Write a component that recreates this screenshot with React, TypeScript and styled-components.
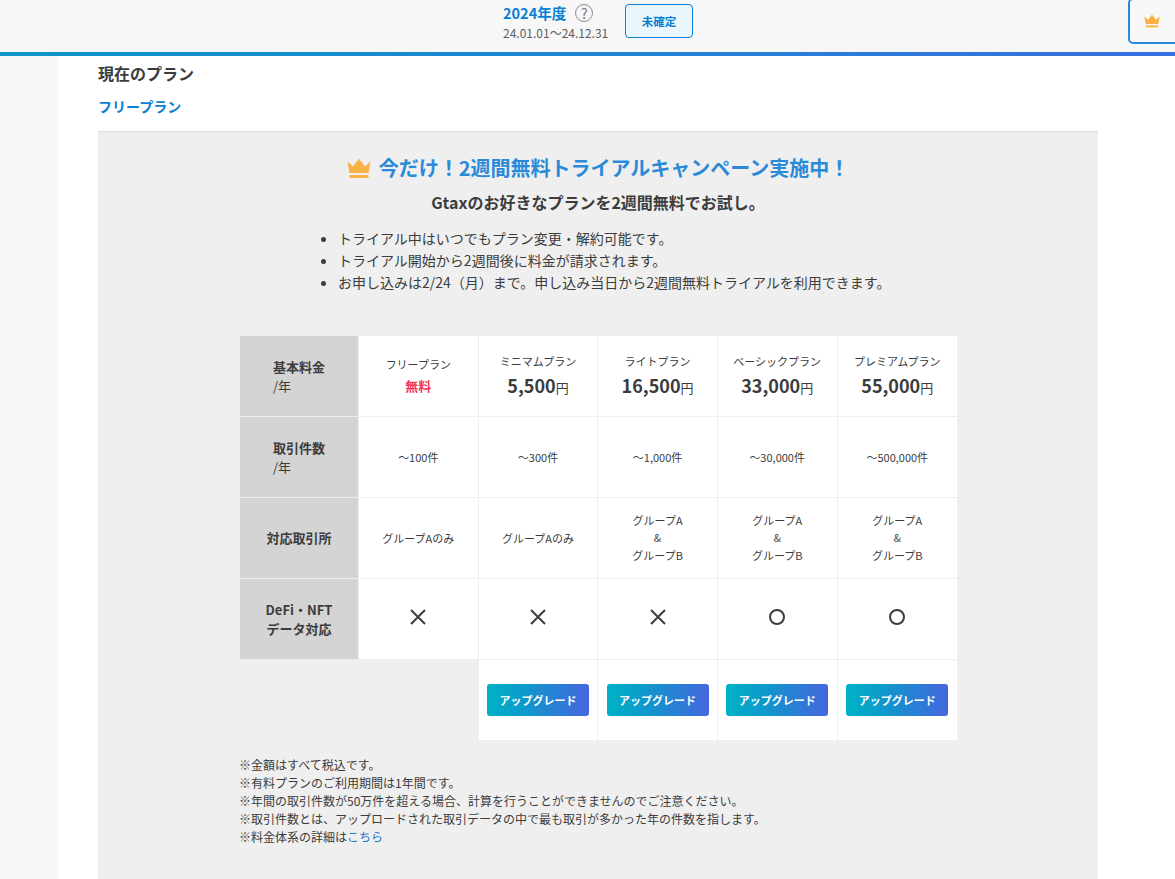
import React from 'react';
import styled, { createGlobalStyle } from 'styled-components';

const GlobalStyle = createGlobalStyle`
  html, body {
    margin: 0;
    padding: 0;
    height: 879px;
    overflow: hidden;
    background: #f7f7f7;
    color: #3c3c3c;
    font-family: "Noto Sans CJK JP", "Noto Sans", sans-serif;
  }
`;

const Header = styled.header`
  position: relative;
  height: 52px;
  background: #f7f7f7;
  border-bottom: 4px solid transparent;
  border-image: linear-gradient(90deg, #0d96c9, #1f85d4 50%, #3a6fde) 1;
  display: flex;
  justify-content: center;
  padding-left: 21px;
`;

const YearBlock = styled.div`
  width: 122px;
  padding-top: 3px;
`;

const YearRow = styled.div`
  display: flex;
  align-items: center;
  gap: 9px;
  height: 20px;
`;

const YearTitle = styled.span`
  font-size: 14.5px;
  font-weight: 700;
  color: #0a7fd3;
  line-height: 20px;
`;

const Help = styled.span`
  width: 16px;
  height: 16px;
  border: 1.5px solid #8a8a8a;
  border-radius: 50%;
  font-size: 14px;
  font-weight: 400;
  color: #777;
  display: flex;
  align-items: center;
  justify-content: center;
  line-height: 1;
`;

const Period = styled.div`
  font-size: 12px;
  color: #5e5e5e;
  line-height: 18px;
  margin-top: 1px;
`;

const Status = styled.div`
  width: 66px;
  height: 32px;
  margin-top: 4px;
  background: #e9f6fc;
  border: 1px solid #0a7fd3;
  border-radius: 4px;
  color: #0a7fd3;
  font-size: 11.5px;
  font-weight: 700;
  display: flex;
  align-items: center;
  justify-content: center;
`;

const CrownTab = styled.div`
  position: absolute;
  top: -2px;
  right: -8px;
  width: 37px;
  height: 42px;
  border: 2px solid #2a8ad8;
  border-radius: 5px;
  background: #f7f7f7;
  display: flex;
  align-items: center;
  padding-left: 14px;
  box-sizing: content-box;
`;

const Main = styled.main`
  margin-left: 58px;
  background: #fff;
  height: 823px;
  padding: 0 77px 0 40px;
`;

const SectionTitle = styled.h2`
  margin: 0;
  padding-top: 5px;
  font-size: 16px;
  font-weight: 700;
  line-height: 24px;
  color: #3c3c3c;
`;

const PlanName = styled.div`
  margin-top: 10px;
  font-size: 14px;
  font-weight: 700;
  line-height: 22px;
  color: #0a7fd3;
`;

const Panel = styled.section`
  margin-top: 14px;
  height: 748px;
  background: #efefef;
  border-top: 1px solid #dcdcdc;
  padding-top: 20px;
`;

const CampaignTitle = styled.h3`
  margin: 0;
  display: flex;
  justify-content: center;
  align-items: center;
  gap: 8px;
  font-size: 20px;
  font-weight: 700;
  line-height: 32px;
  color: #2a8ad8;
`;

const CampaignSub = styled.p`
  margin: 5px 0 0;
  text-align: center;
  font-size: 16px;
  font-weight: 700;
  line-height: 26px;
  color: #3c3c3c;
`;

const Notes = styled.ul`
  margin: 12px 0 0;
  padding: 0 0 0 240px;
  font-size: 14px;
  line-height: 22px;
  color: #3c3c3c;
`;

const Plans = styled.div`
  margin: 43px 0 0 142px;
  width: 717px;
  display: grid;
  grid-template-columns: 118px 118.6px 118.8px 118.4px 118.8px 119.4px;
  grid-auto-rows: 80px;
  gap: 1px;
`;

const HeadCell = styled.div<{ $left?: boolean }>`
  background: #d4d4d4;
  display: flex;
  flex-direction: column;
  justify-content: center;
  align-items: ${(p) => (p.$left ? 'flex-start' : 'center')};
  padding-left: ${(p) => (p.$left ? '33px' : '0')};
  padding-bottom: 1px;
  font-size: 13px;
  font-weight: 700;
  line-height: 19px;
  text-align: center;
  color: #3c3c3c;
`;

const HeadUnit = styled.span`
  font-weight: 400;
`;

const Cell = styled.div<{ $tight?: boolean }>`
  background: #fff;
  display: flex;
  flex-direction: column;
  align-items: center;
  justify-content: center;
  text-align: center;
  font-size: 11px;
  line-height: ${(p) => (p.$tight ? '17.5px' : '19px')};
  color: #3c3c3c;
  svg {
    margin-bottom: 4px;
  }
`;

const Blank = styled.div`
  background: #efefef;
`;

const PlanLabel = styled.div`
  font-size: 11px;
  line-height: 18px;
`;

const Free = styled.div`
  font-size: 13px;
  font-weight: 700;
  line-height: 20px;
  margin: 3px 0 2px;
  color: #f0395c;
`;

const Price = styled.div`
  font-size: 18px;
  font-weight: 700;
  line-height: 28px;
  margin: 1px 0 -2px;
  span {
    font-size: 13px;
    font-weight: 400;
  }
`;

const Upgrade = styled.button`
  width: 102px;
  height: 32px;
  border: 0;
  border-radius: 3px;
  background: linear-gradient(90deg, #00b2c5, #0d9acb 35%, #4566de);
  color: #fff;
  font-family: inherit;
  font-size: 11px;
  font-weight: 700;
  padding: 0;
`;

const Foot = styled.div`
  margin: 16px 0 0 141px;
  font-size: 12px;
  line-height: 18px;
  color: #3c3c3c;
`;

const FootLink = styled.a`
  color: #1a76c2;
`;

const Crown = ({ size }: { size: number }) => (
  <svg width={size} height={size * 0.86} viewBox="0 0 24 20.6" fill="#fbb245">
    <path d="M0.5 3.5 L6 8.5 L12 0.8 L18 8.5 L23.5 3.5 L21.5 15 H2.5 Z" />
    <rect x="2.5" y="17" width="19" height="3" />
  </svg>
);

const Cross = () => (
  <svg width="18" height="18" viewBox="0 0 18 18" stroke="#3c3c3c" strokeWidth="2" fill="none">
    <path d="M2 2 L16 16 M16 2 L2 16" />
  </svg>
);

const Circle = () => (
  <svg width="18" height="18" viewBox="0 0 18 18" stroke="#3c3c3c" strokeWidth="2" fill="none">
    <circle cx="9" cy="9" r="7" />
  </svg>
);

const paid = [
  { name: 'ミニマムプラン', price: '5,500' },
  { name: 'ライトプラン', price: '16,500' },
  { name: 'ベーシックプラン', price: '33,000' },
  { name: 'プレミアムプラン', price: '55,000' },
];

const counts = ['〜100件', '〜300件', '〜1,000件', '〜30,000件', '〜500,000件'];

const GroupAB = () => (
  <Cell $tight>
    <div>グループA</div>
    <div>&amp;</div>
    <div>グループB</div>
  </Cell>
);

const App: React.FC = () => {
  return (
    <>
      <GlobalStyle />
      <Header>
        <YearBlock>
          <YearRow>
            <YearTitle>2024年度</YearTitle>
            <Help>?</Help>
          </YearRow>
          <Period>24.01.01〜24.12.31</Period>
        </YearBlock>
        <Status>未確定</Status>
        <CrownTab>
          <Crown size={16} />
        </CrownTab>
      </Header>
      <Main>
        <SectionTitle>現在のプラン</SectionTitle>
        <PlanName>フリープラン</PlanName>
        <Panel>
          <CampaignTitle>
            <Crown size={24} />
            今だけ！2週間無料トライアルキャンペーン実施中！
          </CampaignTitle>
          <CampaignSub>Gtaxのお好きなプランを2週間無料でお試し。</CampaignSub>
          <Notes>
            <li>トライアル中はいつでもプラン変更・解約可能です。</li>
            <li>トライアル開始から2週間後に料金が請求されます。</li>
            <li>お申し込みは2/24（月）まで。申し込み当日から2週間無料トライアルを利用できます。</li>
          </Notes>
          <Plans>
            <HeadCell $left>
              <div>基本料金</div>
              <HeadUnit>/年</HeadUnit>
            </HeadCell>
            <Cell>
              <PlanLabel>フリープラン</PlanLabel>
              <Free>無料</Free>
            </Cell>
            {paid.map((p) => (
              <Cell key={p.name}>
                <PlanLabel>{p.name}</PlanLabel>
                <Price>
                  {p.price}
                  <span>円</span>
                </Price>
              </Cell>
            ))}

            <HeadCell $left>
              <div>取引件数</div>
              <HeadUnit>/年</HeadUnit>
            </HeadCell>
            {counts.map((c) => (
              <Cell key={c}>{c}</Cell>
            ))}

            <HeadCell>対応取引所</HeadCell>
            <Cell>グループAのみ</Cell>
            <Cell>グループAのみ</Cell>
            <GroupAB />
            <GroupAB />
            <GroupAB />

            <HeadCell>
              <div>DeFi・NFT</div>
              <div>データ対応</div>
            </HeadCell>
            <Cell><Cross /></Cell>
            <Cell><Cross /></Cell>
            <Cell><Cross /></Cell>
            <Cell><Circle /></Cell>
            <Cell><Circle /></Cell>

            <Blank />
            <Blank />
            {paid.map((p) => (
              <Cell key={p.name}>
                <Upgrade>アップグレード</Upgrade>
              </Cell>
            ))}
          </Plans>
          <Foot>
            <div>※金額はすべて税込です。</div>
            <div>※有料プランのご利用期間は1年間です。</div>
            <div>※年間の取引件数が50万件を超える場合、計算を行うことができませんのでご注意ください。</div>
            <div>※取引件数とは、アップロードされた取引データの中で最も取引が多かった年の件数を指します。</div>
            <div>※料金体系の詳細は<FootLink>こちら</FootLink></div>
          </Foot>
        </Panel>
      </Main>
    </>
  );
};

export default App;
